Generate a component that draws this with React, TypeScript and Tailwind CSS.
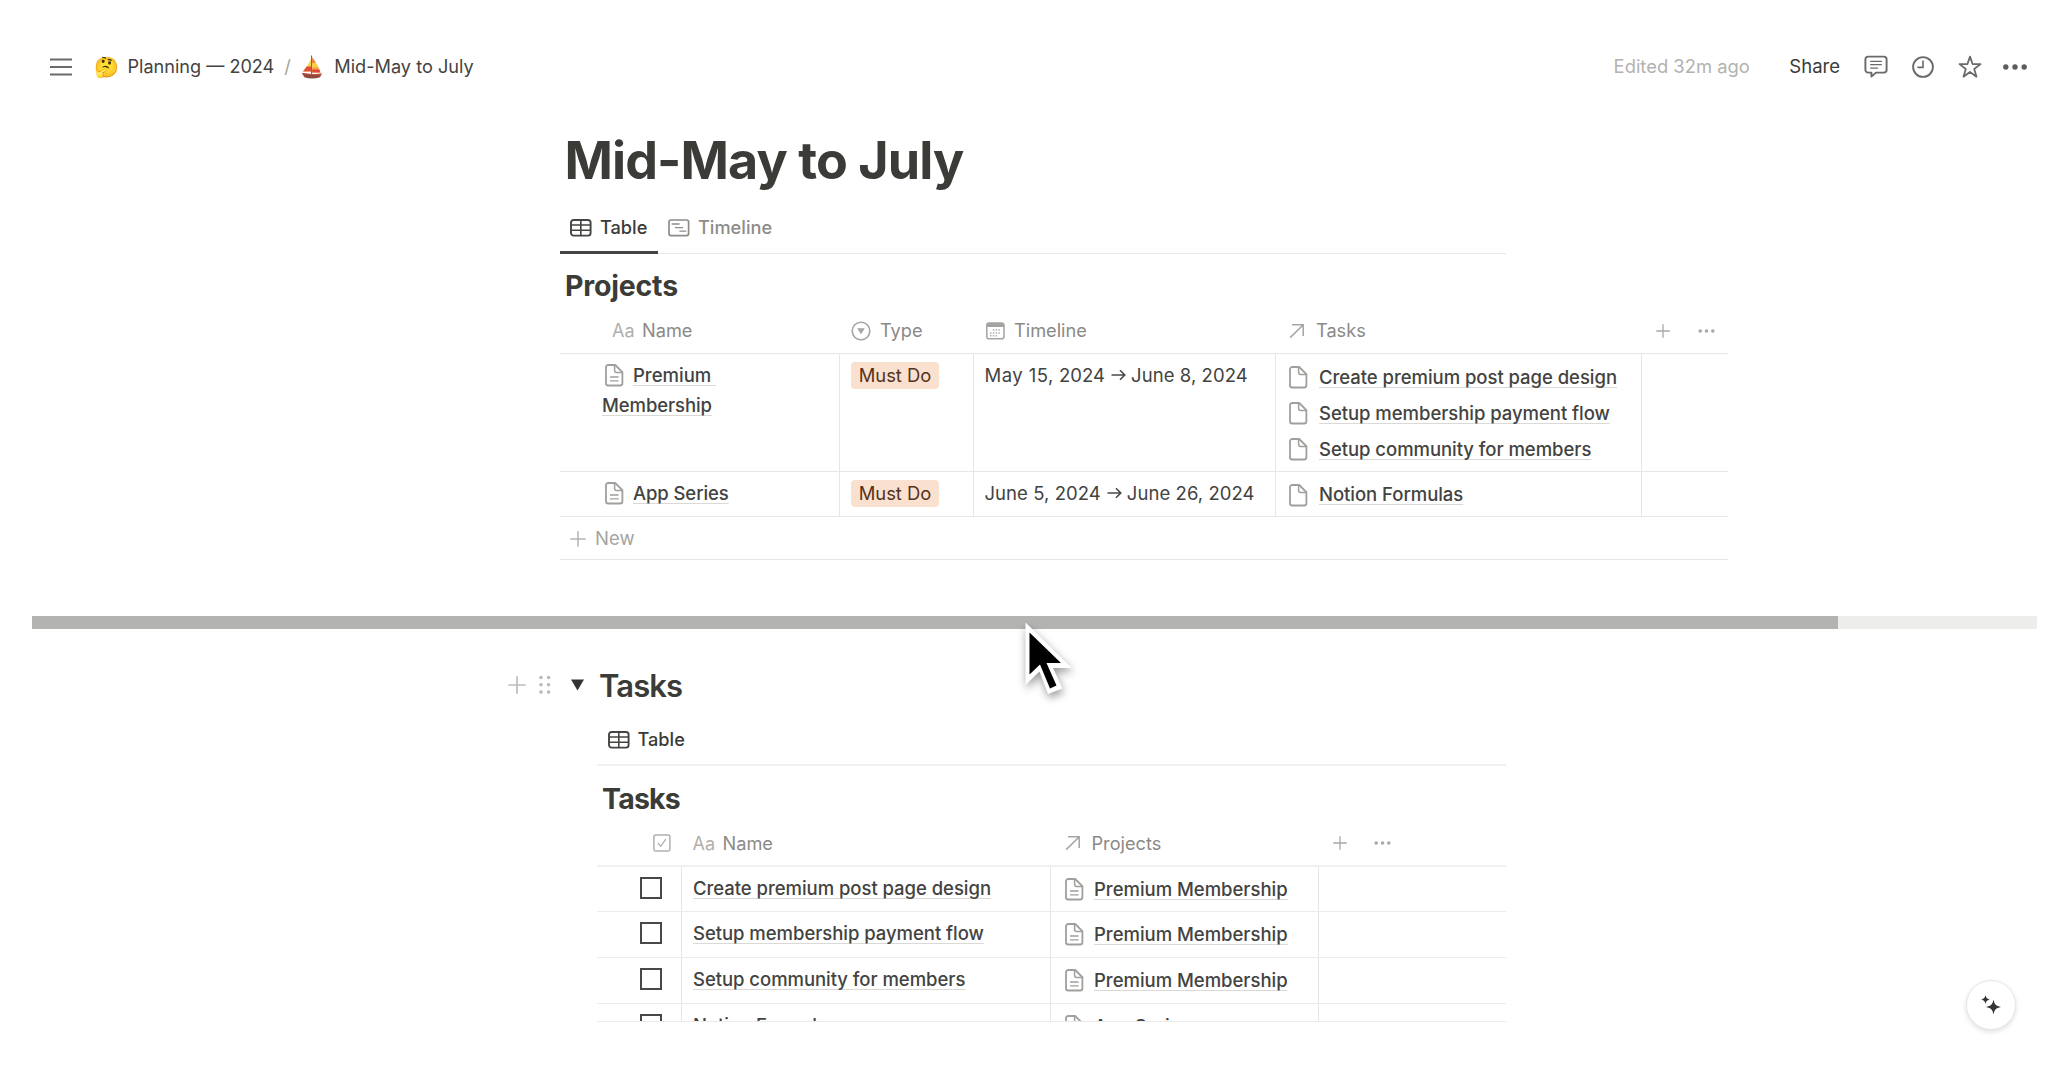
import React, { type ReactNode } from "react";

const LINK =
  "font-medium underline decoration-[#dad9d6] decoration-1 underline-offset-[3px] [text-decoration-skip-ink:none]";

function Hamburger() {
  return (
    <svg width="22" height="18" viewBox="0 0 22 18" stroke="#6a6a68" strokeWidth="2" className="shrink-0">
      <path d="M0 1.5h22M0 9h22M0 16.5h22" />
    </svg>
  );
}

function Sailboat() {
  return (
    <svg width="22" height="24" viewBox="0 0 22 24" className="shrink-0">
      <path d="M10.6 0.5V19" stroke="#9a4a2c" strokeWidth="1" />
      <path d="M11.2 2.5C14.5 7 17.5 11.5 19.5 17.5H11.2z" fill="#f9a33c" />
      <path d="M11.2 2.5C12.6 4.4 13.8 6 14.8 7.8H11.2z" fill="#f0813f" />
      <path d="M11.2 8h3.7l2.2 4.2h-5.9z" fill="#fbd34b" />
      <path d="M11.2 14.6h7.2l1 2.9h-8.2z" fill="#dd4a38" />
      <path d="M10 4C8 8.5 5.4 12.5 2 16.5h8z" fill="#fbd04a" />
      <path d="M10 11.6H5.6L2 16.5h8z" fill="#e0503a" />
      <path d="M0.8 18l2.6 4.3c4.8 1.6 10.6 1.6 15.6 0l1.8-3.6c-6.4.8-13.4.5-20-.7z" fill="#8d4a3a" />
      <path d="M1 17.9c6.6 1.2 13.4 1.4 19.8.6l-.5 1.2c-6.2.9-12.6.7-18.7-.6z" fill="#c2543f" />
    </svg>
  );
}

function CommentIcon() {
  return (
    <svg width="24" height="24" viewBox="0 0 24 24" fill="none" stroke="#6a6a68" strokeWidth="1.9" strokeLinejoin="round" strokeLinecap="round">
      <path d="M4.2 1.6h15.6a2.8 2.8 0 0 1 2.8 2.8v10.4a2.8 2.8 0 0 1-2.8 2.8H12l-4.6 4v-4H4.2a2.8 2.8 0 0 1-2.8-2.8V4.4a2.8 2.8 0 0 1 2.8-2.8z" />
      <path d="M6.6 6.3h10.8M6.6 9.7h10.8M6.6 13.1h7" strokeWidth="1.2" />
    </svg>
  );
}

function ClockIcon() {
  return (
    <svg width="22" height="22" viewBox="0 0 22 22" fill="none" stroke="#6a6a68" strokeWidth="1.9">
      <circle cx="11" cy="11" r="9.9" />
      <path d="M11 4.6V11.4H5.4" strokeWidth="1.6" />
    </svg>
  );
}

function StarIcon() {
  return (
    <svg width="24" height="24" viewBox="0 0 24 24" fill="none" stroke="#6a6a68" strokeWidth="1.8" strokeLinejoin="round">
      <path d="M12 1.6l2.55 7.4 7.95.15-6.3 4.8 2.3 7.7-6.5-4.65-6.5 4.65 2.3-7.7-6.3-4.8 7.95-.15z" />
    </svg>
  );
}

function TableIcon() {
  return (
    <svg width="22" height="18" viewBox="0 0 22 18" fill="none" stroke="#444442" strokeWidth="1.9" className="shrink-0">
      <rect x="1" y="1" width="19.6" height="15.6" rx="2.6" />
      <path d="M1 6h19.6M1 11.2h19.6M10.8 1v15.6" strokeWidth="1.6" />
    </svg>
  );
}

function TimelineIcon() {
  return (
    <svg width="22" height="18" viewBox="0 0 22 18" fill="none" stroke="#8d8c89" strokeWidth="1.7" className="shrink-0">
      <rect x="1" y="1" width="19.6" height="15.6" rx="2" />
      <path d="M3.6 5h8M7 8.6h8M11.4 12.2h7" strokeWidth="1.3" />
    </svg>
  );
}

function SelectIcon() {
  return (
    <svg width="20" height="20" viewBox="0 0 20 20" className="shrink-0">
      <circle cx="10" cy="10" r="8.8" fill="none" stroke="#a5a4a1" strokeWidth="1.6" />
      <path d="M6.2 7.2h7.6L10 13.2z" fill="#a5a4a1" />
    </svg>
  );
}

function CalendarIcon() {
  return (
    <svg width="19" height="18" viewBox="0 0 19 18" className="shrink-0">
      <rect x="0.8" y="1" width="17.2" height="15.8" rx="2.4" fill="none" stroke="#a5a4a1" strokeWidth="1.5" />
      <path d="M0.8 3.4A2.4 2.4 0 0 1 3.2 1h12.4A2.4 2.4 0 0 1 18 3.4V5H.8z" fill="#a5a4a1" />
      <path d="M6.8 8h8.4M4 10.9h11.2M4 13.8h8.4" stroke="#b4b3b0" strokeWidth="1.5" strokeDasharray="1.5 1.3" />
    </svg>
  );
}

function RelationIcon() {
  return (
    <svg width="16" height="16" viewBox="0 0 16 16" fill="none" stroke="#a5a4a1" strokeWidth="1.5" className="shrink-0">
      <path d="M3 1.8h11.2V13M14 2L1.2 14.6" />
    </svg>
  );
}

function Plus({ size, color }: { size: number; color: string }) {
  return (
    <svg width={size} height={size} viewBox="0 0 18 18" stroke={color} strokeWidth="1.7" className="shrink-0">
      <path d="M9 .3v17.4M.3 9h17.4" />
    </svg>
  );
}

function Dots() {
  return (
    <svg width="18" height="6" viewBox="0 0 18 6" fill="#aaa9a6" className="shrink-0">
      <circle cx="2.2" cy="3" r="1.8" />
      <circle cx="8.5" cy="3" r="1.8" />
      <circle cx="14.8" cy="3" r="1.8" />
    </svg>
  );
}

function PageIcon({ lines = false }: { lines?: boolean }) {
  return (
    <svg width="19" height="23" viewBox="0 0 19 23" fill="none" stroke="#a09f9c" strokeWidth="1.8" strokeLinejoin="round" className="shrink-0">
      <path d="M3.3 1h6.9l7.2 7.2v11a2.3 2.3 0 0 1-2.3 2.3H3.3A2.3 2.3 0 0 1 1 19.2V3.3A2.3 2.3 0 0 1 3.3 1z" />
      <path d="M9.6 1.2v5.4a2 2 0 0 0 2 2h5.6" strokeWidth="1.5" />
      {lines && <path d="M5 13h8.6M5 16.8h8.6" strokeWidth="1.3" />}
    </svg>
  );
}

function CheckIcon() {
  return (
    <svg width="18" height="18" viewBox="0 0 18 18" fill="none" stroke="#b1b0ad" strokeWidth="1.5" className="shrink-0">
      <rect x="0.9" y="0.9" width="16" height="16" rx="1.6" />
      <path d="M5 9.3l2.8 3 5-7.2" strokeWidth="1.3" />
    </svg>
  );
}

function Aa() {
  return <span className="w-[23px] shrink-0 text-[18px] text-[#b0afac]">Aa</span>;
}

function Cell({ className, last, children }: { className: string; last?: boolean; children?: ReactNode }) {
  return <div className={`shrink-0 ${last ? "" : "border-r border-[#e6e6e4]"} ${className}`}>{children}</div>;
}

function Tag() {
  return (
    <div className="flex h-[27px] w-[88px] items-center justify-center rounded-[4px] bg-[#fae0ce] text-[18.4px] text-[#54331b]">
      Must Do
    </div>
  );
}

function ProjectRow({ className, name, dates, tasks, tasksPad }: { className: string; name: ReactNode; dates: ReactNode; tasks: string[]; tasksPad: string }) {
  return (
    <div className={`flex border-b border-[#e6e6e4] ${className}`}>
      <Cell className="w-[280px] pl-[42px] pt-[7px]">
        <div className="leading-[29.5px]">
          <span className="mr-[9px] inline-flex pl-[3px] align-[-5px]">
            <PageIcon lines />
          </span>
          {name}
        </div>
      </Cell>
      <Cell className="w-[134px] pl-[11px] pt-[8px]">
        <Tag />
      </Cell>
      <Cell className="w-[302px] pl-[10.5px] pt-[7px] leading-[29.5px] tracking-[0.06px]">{dates}</Cell>
      <Cell className={`w-[366px] pl-[13px] ${tasksPad}`}>
        {tasks.map((t) => (
          <div key={t} className="flex h-[36px] items-center gap-[11px]">
            <PageIcon />
            <span className={`${LINK} tracking-[-0.04px]`}>{t}</span>
          </div>
        ))}
      </Cell>
      <Cell className="w-[86px]" last />
    </div>
  );
}

function DateArrow() {
  return (
    <svg width="15" height="12" viewBox="0 0 15 12" fill="none" stroke="#4a4a48" strokeWidth="1.6" className="ml-[6px] mr-[5px] inline-block align-[1px]">
      <path d="M0.5 6h13M9 1.2L13.8 6 9 10.8" />
    </svg>
  );
}

function TaskRow({ className, name, project }: { className: string; name: string; project: string }) {
  return (
    <div className={`flex border-b border-[#ebebea] ${className}`}>
      <Cell className="flex w-[85px] items-start pl-[42.5px] pt-[10px]">
        <div className="size-[22px] border-2 border-[#484846]" />
      </Cell>
      <Cell className="w-[369px] pl-[11px] pt-[7px] leading-[29px]">
        <span className={`${LINK} tracking-[-0.04px]`}>{name}</span>
      </Cell>
      <Cell className="w-[268px] pl-[14px] pt-[8px]">
        <div className="flex h-[29px] items-center gap-[10px]">
          <PageIcon lines />
          <span className={`${LINK} tracking-[-0.02px]`}>{project}</span>
        </div>
      </Cell>
      <Cell className="w-[187px]" last />
    </div>
  );
}

export default function App() {
  return (
    <div className="relative h-[1080px] w-[2068px] overflow-hidden bg-white font-['Inter','Liberation_Sans',sans-serif] text-[18.5px] text-[#434341]">
      <header className="flex h-[134px] items-center pl-[50px] pr-[40px]">
        <Hamburger />
        <span className="ml-[22px] flex w-[24px] justify-center text-[20px] leading-none">🤔</span>
        <span className="ml-[9.5px] text-[18.1px]">Planning — 2024</span>
        <span className="ml-[10px] w-[8px] text-[18.2px] text-[#a3a2a0]">/</span>
        <span className="ml-[9px]">
          <Sailboat />
        </span>
        <span className="ml-[11px] text-[18.15px]">Mid-May to July</span>
        <span className="ml-auto text-[18.4px] text-[#b3b2b0]">Edited 32m ago</span>
        <span className="ml-[39.5px] text-[18.5px] text-[#3a3a38]">Share</span>
        <span className="ml-[24px]"><CommentIcon /></span>
        <span className="ml-[24px]"><ClockIcon /></span>
        <span className="ml-[24px]"><StarIcon /></span>
        <svg width="26" height="8" viewBox="0 0 26 8" fill="#5d5d5b" className="ml-[20px]">
          <circle cx="3.8" cy="4" r="2.7" />
          <circle cx="13" cy="4" r="2.7" />
          <circle cx="22.2" cy="4" r="2.7" />
        </svg>
      </header>

      <section className="ml-[560px] w-[1168px]">
        <h1 className="h-[53px] pl-[4.5px] text-[52px] font-bold leading-[53px] tracking-[-0.9px] text-[#3b3b38]">Mid-May to July</h1>
        <div className="mt-[16px] flex h-[51px] w-[946px] border-b border-[#e9e9e7] text-[18.2px] font-medium">
          <div className="flex h-[51px] w-[98px] items-center gap-[8px] border-b-[3px] border-[#444442] pl-[10px] pt-[2px] text-[#3a3a38]">
            <TableIcon />
            <span>Table</span>
          </div>
          <div className="flex h-[50px] items-center gap-[8px] pl-[10px] text-[#8d8c89]">
            <TimelineIcon />
            <span>Timeline</span>
          </div>
        </div>
        <h2 className="mt-[12px] h-[40px] pl-[5px] text-[28.5px] font-bold leading-[40px] tracking-[-0.2px] text-[#3b3b38]">Projects</h2>
        <div className="mt-[3px] flex h-[45px] items-center border-b border-[#e6e6e4] text-[18.2px] text-[#8b8a87]">
          <div className="flex w-[280px] items-center gap-[6px] pl-[52px]"><Aa /><span className="ml-px">Name</span></div>
          <div className="flex w-[134px] items-center gap-[9px] pl-[11px]"><SelectIcon /><span>Type</span></div>
          <div className="flex w-[302px] items-center gap-[9px] pl-[12px]"><CalendarIcon /><span>Timeline</span></div>
          <div className="flex w-[366px] items-center gap-[11px] pl-[13px]"><RelationIcon /><span>Tasks</span></div>
          <div className="flex items-center gap-[28px] pl-[14px]"><Plus size={14} color="#aaa9a6" /><Dots /></div>
        </div>
        <ProjectRow
          className="h-[118px]"
          name={<><span className={LINK}>Premium&nbsp;</span><br /><span className={`${LINK} tracking-[-0.1px]`}>Membership</span></>}
          dates={<><span className="tracking-[0.45px]">May 15,</span> 2024<DateArrow />June 8, 2024</>}
          tasks={["Create premium post page design", "Setup membership payment flow", "Setup community for members"]}
          tasksPad="pt-[5.5px]"
        />
        <ProjectRow
          className="h-[45px]"
          name={<span className={`${LINK} tracking-[-0.1px]`}>App Series</span>}
          dates={<>June 5, 2024<DateArrow />June 26, 2024</>}
          tasks={["Notion Formulas"]}
          tasksPad="pt-[5px]"
        />
        <div className="flex h-[43px] items-center gap-[9px] border-b border-[#e6e6e4] pl-[10px] pt-[1px] text-[#a5a4a1]">
          <Plus size={16} color="#b5b4b1" />
          <span>New</span>
        </div>
      </section>

      <div className="ml-[31.5px] mt-[56px] flex h-[13px] w-[2005px] bg-[#ededec]">
        <div className="w-[1806px] bg-[#b3b3b1]" />
      </div>

      <section className="ml-[508px] mt-[32px] w-[998px]">
        <div className="flex h-[47px] items-center">
          <Plus size={18} color="#bdbcba" />
          <svg width="12" height="20" viewBox="0 0 12 20" fill="#bab9b6" className="ml-[13px]">
            <circle cx="2" cy="2.5" r="1.8" /><circle cx="9.6" cy="2.5" r="1.8" />
            <circle cx="2" cy="9.8" r="1.8" /><circle cx="9.6" cy="9.8" r="1.8" />
            <circle cx="2" cy="17.1" r="1.8" /><circle cx="9.6" cy="17.1" r="1.8" />
          </svg>
          <svg width="13" height="12" viewBox="0 0 13 12" fill="#343432" className="ml-[19.5px]">
            <path d="M0 .5h13L6.500 11.5z" />
          </svg>
          <h2 className="ml-[15.5px] pt-px text-[31px] font-semibold leading-[47px] tracking-[-0.9px] text-[#3b3b38]">Tasks</h2>
        </div>
        <div className="ml-[89px]">
          <div className="mt-[6px] flex h-[52px] items-center gap-[8px] border-b-2 border-[#f0f0ef] pl-[10.5px] pt-[1px] text-[18.2px] font-medium text-[#3a3a38]">
            <TableIcon />
            <span>Table</span>
          </div>
          <h3 className="mt-[12px] h-[41px] pl-[5px] text-[28.5px] font-bold leading-[41px] tracking-[-0.8px] text-[#3b3b38]">Tasks</h3>
          <div className="mt-[2px] flex h-[46px] items-center border-b-2 border-[#f0f0ef] text-[18.2px] text-[#8b8a87]">
            <div className="w-[85px] pl-[55.5px]"><CheckIcon /></div>
            <div className="flex w-[369px] items-center gap-[7px] pl-[10.5px] pt-[1px]"><Aa /><span>Name</span></div>
            <div className="flex w-[268px] items-center gap-[11px] pl-[13.5px] pt-[1px]"><RelationIcon /><span>Projects</span></div>
            <div className="flex items-center gap-[27px] pl-[14px]"><Plus size={14} color="#aaa9a6" /><Dots /></div>
          </div>
          <div className="h-[155px] overflow-hidden border-b border-[#ebebea]">
            <TaskRow className="h-[45px]" name="Create premium post page design" project="Premium Membership" />
            <TaskRow className="h-[46px]" name="Setup membership payment flow" project="Premium Membership" />
            <TaskRow className="h-[46px]" name="Setup community for members" project="Premium Membership" />
            <TaskRow className="h-[45px]" name="Notion Formulas" project="App Series" />
          </div>
        </div>
      </section>

      <svg width="60" height="84" viewBox="0 0 60 84" className="absolute left-[1014px] top-[614px] drop-shadow-[1px_4px_4px_rgba(0,0,0,0.4)]">
        <path d="M11.5 8.5V71l14-13.500 8.500 22.500 14.500-5.500-9.500-20.500h19z" fill="#fff" />
        <path d="M15.5 18.5V60.500l10.500-10 10 24 6.500-3-10-22.500h14.500z" fill="#000" />
      </svg>

      <div className="absolute left-[1966px] top-[980px] flex size-[50px] items-center justify-center rounded-full border border-[#e6e6e5] bg-white shadow-[0_2px_5px_rgba(0,0,0,0.12)]">
        <svg width="22" height="22" viewBox="0 0 22 22" fill="#343432">
          <path d="M5.5 1c.7 3 1.3 3.600 4.500 4.500-3.200.9-3.800 1.500-4.500 4.500-.7-3-1.300-3.600-4.500-4.500 3.200-.9 3.800-1.500 4.500-4.500z" />
          <path d="M13.5 5.500c1.100 5.200 2.300 6.400 7.500 7.500-5.200 1.100-6.400 2.300-7.500 7.500-1.100-5.200-2.300-6.400-7.500-7.500 5.200-1.100 6.400-2.300 7.500-7.500z" />
        </svg>
      </div>
    </div>
  );
}
